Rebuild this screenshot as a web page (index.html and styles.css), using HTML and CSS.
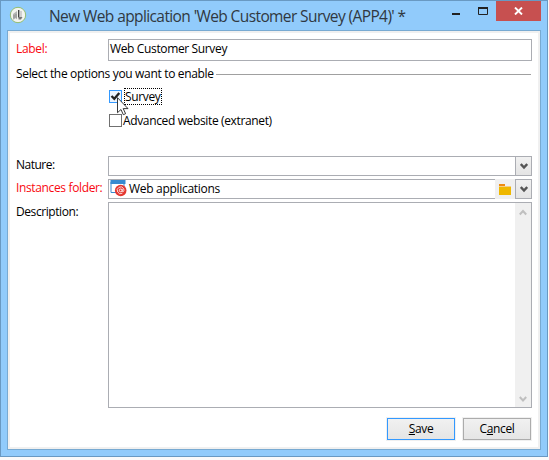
FILE: index.html
```html
<!DOCTYPE html>
<html lang="en">
<head>
<meta charset="utf-8">
<title>New Web application</title>
<link rel="stylesheet" href="styles.css">
</head>
<body>
<div class="window">
  <header class="titlebar">
    <svg class="logo" width="18" height="18" viewBox="0 0 18 18"><circle cx="9" cy="9" r="7.700" fill="#f3f4ef" stroke="#91bd72" stroke-width="1"/><path d="M4 8 8 5v8.500l-1.500-2L5 13.500H4z" fill="#b4b5b3"/><path d="M7 8v4.500M5 9v3.500" stroke="#888" stroke-width=".8"/><path d="M9.700 4v7.500" stroke="#444" stroke-width="1.400"/><path d="M9.500 11h4L12 13.500H9.500z" fill="#777"/><path d="M12 5v6" stroke="#c4c4c4" stroke-width="1.500"/></svg>
    <h1 class="title">New Web application 'Web Customer Survey (APP4)' *</h1>
    <div class="controls">
      <svg width="45" height="20" viewBox="0 0 45 20"><rect x="1" y="12" width="8" height="2" fill="#222"/><path d="M27.500 6.500h9v7h-9z" fill="none" stroke="#222"/><path d="M27 7h10" stroke="#222" stroke-width="2"/></svg>
      <div class="close"><svg width="9" height="8" viewBox="0 0 9 8"><path d="M1 .5 8 7.500M8 .5 1 7.500" stroke="#fff" stroke-width="1.9"/></svg></div>
    </div>
  </header>
  <main class="panel">
    <div class="row label-row"><label class="req t-label">Label:</label><div class="field"><span class="t-value">Web Customer Survey</span></div></div>
    <div class="section"><span class="t-section">Select the options you want to enable</span><i></i></div>
    <div class="options">
      <div class="option"><span class="box checked"><svg width="11" height="11" viewBox="0 0 11 11"><path d="M1.500 5 4.300 7.800 9.300 2" fill="none" stroke="#222" stroke-width="2.300"/></svg></span><span class="focus">Survey</span>
        <svg class="cursor" width="12" height="19" viewBox="0 0 12 19"><path d="M.5.7v15l3.500-3.200 2.300 5.200 2.300-1-2.400-5.100h4.800z" fill="#fff" stroke="#222" stroke-width=".9"/></svg>
      </div>
      <div class="option"><span class="box"></span><span class="t-adv">Advanced website (extranet)</span></div>
    </div>
    <div class="row combo-row"><label class="t-nature">Nature:</label><div class="field"><span class="drop"><svg width="8" height="7" viewBox="0 0 8 7"><path d="M.8 1 4 4.500 7.200 1" fill="none" stroke="#555" stroke-width="2.400"/></svg></span></div></div>
    <div class="row combo-row"><label class="req t-inst">Instances folder:</label><div class="field folder-field">
      <svg class="app" width="17" height="17" viewBox="0 0 17 17"><path d="M1 2v10.500h13V2" fill="#fff" stroke="#378bd0"/><rect x=".5" width="15" height="4" fill="#378bd0"/><circle cx="10.700" cy="10.500" r="5.800" fill="#e43831"/><circle cx="10.700" cy="10.400" r="1.400" fill="none" stroke="#fff" stroke-width=".9"/><path d="M12.200 8.800v2.200q.2 1 1.200.6 1-1.100.3-2.800a3.400 3.400 0 1 0-1.300 4.400" fill="none" stroke="#fff" stroke-width=".8"/></svg>
      <span class="t-app">Web applications</span>
      <span class="browse"><svg width="12" height="11" viewBox="0 0 12 11"><path d="M0 0h6v2H0z" fill="#ee8b13"/><path d="M0 2h12v2H0z" fill="#f4ce87"/><path d="M0 3h12v8H0z" fill="#efb800"/></svg></span>
      <span class="drop"><svg width="8" height="7" viewBox="0 0 8 7"><path d="M.8 1 4 4.500 7.200 1" fill="none" stroke="#555" stroke-width="2.400"/></svg></span></div></div>
    <div class="row area-row"><label class="t-desc">Description:</label><div class="field"><span class="scroll"><svg width="8" height="7" viewBox="0 0 8 7"><path d="M.8 5.500 4 2 7.200 5.500" fill="none" stroke="#bfbfbf" stroke-width="2"/></svg><svg width="8" height="7" viewBox="0 0 8 7"><path d="M.8 1 4 4.500 7.200 1" fill="none" stroke="#bfbfbf" stroke-width="2"/></svg></span></div></div>
    <footer class="actions"><button class="primary"><u>S</u>ave</button><button>C<u>a</u>ncel</button></footer>
  </main>
</div>
</body>
</html>
```
FILE: styles.css
```css
* { box-sizing: border-box; }
body { margin: 0; width: 549px; height: 460px; overflow: hidden; background: #fafafa; font: 12px/16px "Open Sans", "Noto Sans", sans-serif; letter-spacing: -.36px; color: #000; }
svg { display: block; flex: none; }
span { white-space: nowrap; }
.window { width: 548px; height: 457px; border: 1px solid #6999c2; background: #91cbfb; padding: 0 6px; }
.titlebar { height: 29px; display: flex; align-items: flex-start; }
.logo { margin: 5px 0 0 2px; }
.title { margin: 4px 0 0 22px; width: 390px; font-size: 15.5px; line-height: 22px; font-weight: 400; color: #303841; white-space: nowrap; letter-spacing: -.6px; }
.controls { display: flex; margin-left: auto; }
.close { width: 45px; height: 20px; background: #c75050; display: flex; align-items: center; justify-content: center; }
.panel { width: 534px; height: 420px; border: 1px solid #78aad2; background: #fff; box-shadow: inset 0 0 0 2px #f0f0f0; padding: 8px 8px 0; }
.row { display: grid; grid-template-columns: 92px 424px; }
.row label { white-space: nowrap; }
.req { color: #f90810; }
.t-label { letter-spacing: -.3px; }
.t-nature { letter-spacing: -.5px; }
.t-desc { letter-spacing: -.42px; }
.t-section { letter-spacing: -.33px; }
.field { border: 1px solid #abadb3; background: #fff; display: flex; }
.label-row { height: 22px; }
.label-row label { padding-top: 2px; }
.label-row .field { padding: 1px 0 0 1px; }
.section { height: 27px; padding-top: 5px; display: flex; align-items: flex-start; }
.section i { flex: 1; height: 1px; background: #a0a0a0; margin: 8px 1px 0 2px; }
.options { height: 68px; padding-left: 93px; }
.option { height: 24px; display: flex; align-items: flex-start; position: relative; }
.box { width: 13px; height: 13px; margin-top: 2px; border: 1px solid #707070; background: #fff; }
.box.checked { border-color: #3399ff; background: #edf5ff; }
.focus { height: 17px; width: 38px; margin-left: 2px; border: 1px dotted #000; line-height: 16px; }
.option > .t-adv { margin: 1px 0 0 1px; }
.cursor { position: absolute; left: 8px; top: 9px; }
.combo-row { height: 20px; margin-bottom: 3px; }
.combo-row label { padding-top: 1px; }
.combo-row .field { justify-content: flex-end; }
.drop { width: 16px; border-left: 1px solid #abadb3; background: linear-gradient(#f1f1f1, #e4e4e4); display: flex; align-items: center; justify-content: center; }
.combo-row .folder-field { justify-content: flex-start; }
.app { margin-left: 1px; }
.t-app { margin-left: 2px; line-height: 17px; letter-spacing: -.3px; }
.browse { width: 20px; height: 20px; margin: -1px 0 -1px auto; background: #f0f0f0; display: flex; align-items: center; justify-content: center; }
.area-row { height: 206px; }
.area-row label { padding-top: 2px; }
.area-row .field { justify-content: flex-end; }
.scroll { width: 16px; background: #f0f0f0; display: flex; flex-direction: column; justify-content: space-between; align-items: center; padding: 6px 0 4px; }
.actions { display: flex; gap: 8px; justify-content: flex-end; padding: 10px 1px 0 0; }
.actions button { width: 68px; height: 22px; padding: 0 0 1px; border: 1px solid #acacac; background: linear-gradient(#f1f1f1, #e5e5e5); box-shadow: 0 0 0 1px #f0f0f0; font: inherit; letter-spacing: inherit; color: #000; }
.actions .primary { border-color: #3399ff; }
u { text-underline-offset: 1px; }
```
